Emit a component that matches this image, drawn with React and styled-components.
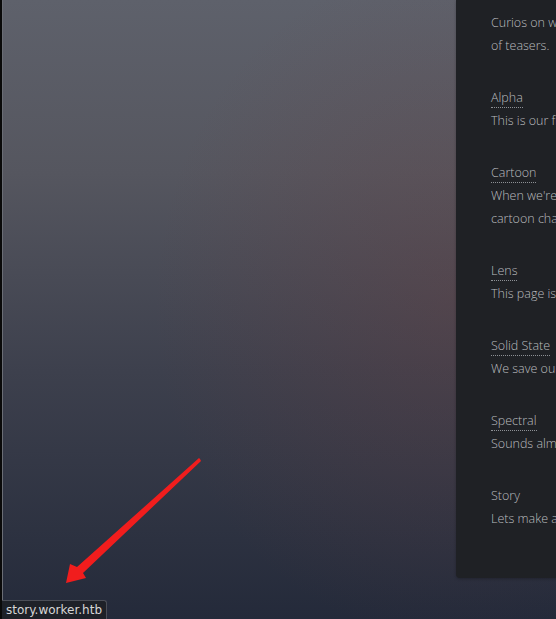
import React from "react";
import styled, { createGlobalStyle } from "styled-components";

const GlobalStyle = createGlobalStyle`
  html, body {
    margin: 0;
    padding: 0;
    background: #000;
  }
  body {
    font-family: "Open Sans", "Noto Sans", sans-serif;
  }
`;

const entries = [
  { title: null, lines: ["Curios on what we are building, a small collection", "of teasers."] },
  { title: "Alpha", lines: ["This is our first template, built from scratch."] },
  {
    title: "Cartoon",
    lines: ["When we're not coding we like to draw our favourite", "cartoon characters."],
  },
  { title: "Lens", lines: ["This page is a gallery of photos we took."] },
  { title: "Solid State", lines: ["We save our notes in a solid state drive."] },
  { title: "Spectral", lines: ["Sounds almost like a ghost, doesn't it?"] },
  { title: "Story", lines: ["Lets make a story together."], plain: true },
];

export default function App() {
  return (
    <>
      <GlobalStyle />
      <Window>
        <Edge />
        <Stage>
          <Gap />
          <Panel>
            {entries.map((e, i) => (
              <Entry key={i}>
                {e.title && <Title $plain={e.plain}>{e.title}</Title>}
                <Text>
                  {e.lines.map((l, j) => (
                    <Line key={j}>{l}</Line>
                  ))}
                </Text>
              </Entry>
            ))}
          </Panel>
          <Arrow viewBox="0 0 556 619" width={556} height={619}>
            <polygon
              points="200,459 201,461 83,573 86,578 66,583 70,564 77,567 199,458"
              fill="#f11d1d"
            />
          </Arrow>
          <StatusLink>story.worker.htb</StatusLink>
        </Stage>
      </Window>
    </>
  );
}

const Window = styled.div`
  display: flex;
  width: 556px;
  height: 619px;
  overflow: hidden;
`;

const Edge = styled.div`
  flex: 0 0 2px;
  background: #0a0a0a;
  border-right: 1px solid #6a6d75;
`;

const Stage = styled.div`
  position: relative;
  flex: 1;
  display: flex;
  align-items: flex-start;
  background:
    radial-gradient(ellipse 300px 340px at 450px 300px, rgba(110, 62, 62, 0.3), rgba(110, 62, 62, 0) 100%),
    linear-gradient(180deg, #5e616b 0%, #55565f 28%, #3d404d 60%, #242a3a 100%);
`;

const Gap = styled.div`
  flex: 0 0 453px;
`;

const Panel = styled.div`
  flex: 0 0 380px;
  height: 578px;
  box-sizing: border-box;
  padding: 11px 0 0 35px;
  background: #1f2125;
  border-bottom-left-radius: 4px;
  box-shadow: 0 1px 3px rgba(0, 0, 0, 0.25);
  display: flex;
  flex-direction: column;
  gap: 31px;
  color: #babcbf;
  font-family: "Open Sans", sans-serif;
  font-weight: 300;
  font-size: 12.5px;
  line-height: 23px;
  white-space: nowrap;
`;

const Entry = styled.div`
  display: flex;
  flex-direction: column;
`;

const Title = styled.span`
  align-self: flex-start;
  line-height: 19px;
  margin-bottom: 1px;
  border-bottom: ${(p) => (p.$plain ? "1px solid transparent" : "1px dotted #8d9095")};
`;

const Text = styled.div`
  display: flex;
  flex-direction: column;
`;

const Line = styled.span``;

const Arrow = styled.svg`
  position: absolute;
  left: -3px;
  top: 0;
  pointer-events: none;
`;

const StatusLink = styled.div`
  position: absolute;
  left: -1px;
  bottom: 0;
  height: 18px;
  padding: 0 4px 0 4px;
  background: #1e2128;
  border: 1px solid #4b4e57;
  border-bottom: none;
  border-left: none;
  border-top-right-radius: 3px;
  color: #d6d6d6;
  font-family: "DejaVu Sans", sans-serif;
  font-size: 12px;
  line-height: 19px;
`;
